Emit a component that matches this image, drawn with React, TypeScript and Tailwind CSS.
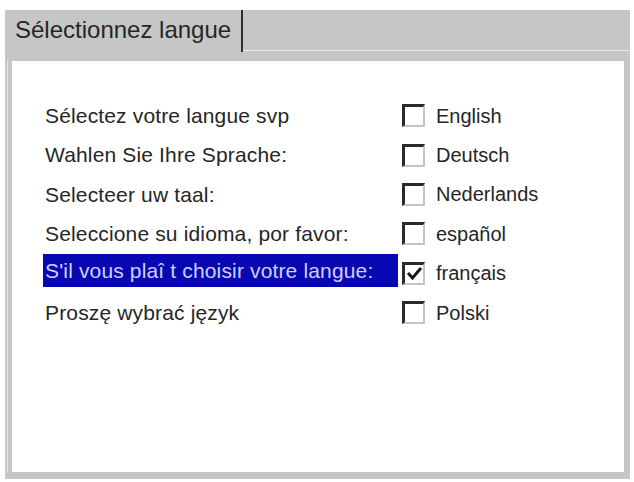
const prompts = [
  'Sélectez votre langue svp',
  'Wahlen Sie Ihre Sprache:',
  'Selecteer uw taal:',
  'Seleccione su idioma, por favor:',
  "S'il vous plaî t choisir votre langue:",
  'Proszę wybrać język',
];

const languages = ['English', 'Deutsch', 'Nederlands', 'español', 'français', 'Polski'];

const selected = 4;

function CheckBox({ checked }: { checked: boolean }) {
  return (
    <div className="w-[23px] h-[23px] shrink-0 bg-white border-t-[3px] border-l-[3px] border-t-[#2a2a2a] border-l-[#2a2a2a] border-r-2 border-b-2 border-r-[#c4c4c4] border-b-[#c4c4c4] flex items-center justify-center">
      {checked && (
        <svg width="17" height="17" viewBox="0 0 17 17">
          <polyline points="2,8 6.5,13 15,3" fill="none" stroke="#1a1a1a" strokeWidth="3" />
        </svg>
      )}
    </div>
  );
}

export default function App() {
  return (
    <div className="w-[634px] h-[482px] bg-white pt-[10px] pl-[5px] font-['Liberation_Sans',Arial,sans-serif] text-[#262626]">
      <div className="w-[625px] h-[469px] bg-[#c6c6c6] flex flex-col">
        {/* tab strip */}
        <div className="h-[51px] flex shrink-0">
          <div className="w-[238px] h-[42px] pl-[10px] flex items-center text-[24px] border-r-2 border-[#303030] pb-[2px]">
            Sélectionnez langue
          </div>
          <div className="flex-1 h-[41px] border-b border-[#ececec]" />
        </div>

        {/* body */}
        <div className="flex-1 pl-[2px] pr-[6px] pb-[7px] flex">
          <div className="flex-1 border-l border-[#e4e4e4] pl-[4px] flex">
            <div className="flex-1 bg-white pt-[35px] pl-[31px]">
              {prompts.map((p, i) => (
                <div key={p} className="h-[39.4px] flex items-center">
                  <div
                    className={
                      i === selected
                        ? 'w-[355px] h-[33px] px-[2px] flex items-center bg-[#0808b2] text-[#cfcfff] text-[21px] tracking-[0.15px] -mt-[5px]'
                        : 'w-[355px] h-[33px] px-[2px] flex items-center text-[21px] tracking-[0.15px]'
                    }
                  >
                    {p}
                  </div>
                  <div className="ml-[4px]">
                    <CheckBox checked={i === selected} />
                  </div>
                  <span className="ml-[11px] text-[20px]">{languages[i]}</span>
                </div>
              ))}
            </div>
          </div>
        </div>
      </div>
    </div>
  );
}
